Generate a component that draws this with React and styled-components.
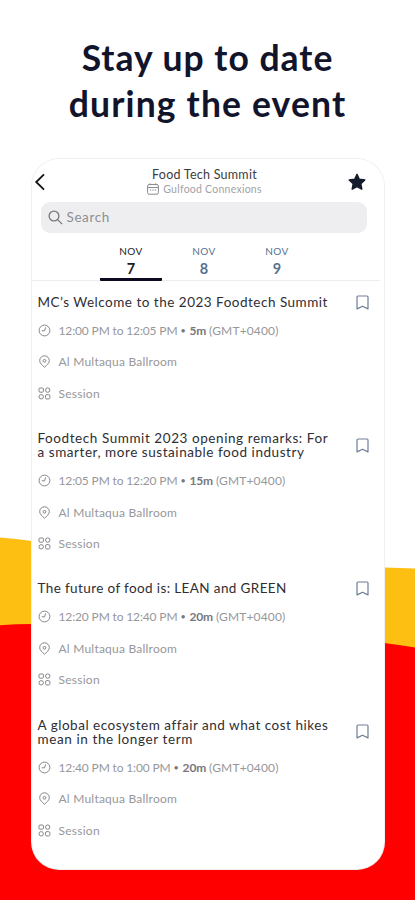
import styled, { createGlobalStyle } from "styled-components";

const sessions = [
  {
    title: [{ text: "MC’s Welcome to the 2023 Foodtech Summit", spacing: 0.5 }],
    time: "12:00 PM to 12:05 PM",
    length: "5m",
  },
  {
    title: [
      { text: "Foodtech Summit 2023 opening remarks: For", spacing: 0.57 },
      { text: "a smarter, more sustainable food industry", spacing: 0.55 },
    ],
    time: "12:05 PM to 12:20 PM",
    length: "15m",
  },
  {
    title: [{ text: "The future of food is: LEAN and GREEN", spacing: 0.38 }],
    time: "12:20 PM to 12:40 PM",
    length: "20m",
  },
  {
    title: [
      { text: "A global ecosystem affair and what cost hikes", spacing: 0.52 },
      { text: "mean in the longer term", spacing: 0.6 },
    ],
    time: "12:40 PM to 1:00 PM",
    length: "20m",
  },
];

const days = ["7", "8", "9"];

const ClockIcon = () => (
  <svg width="13" height="13" viewBox="0 0 13 13" fill="none" stroke="#85858b">
    <circle cx="6.5" cy="6.5" r="5.4" />
    <path d="M7.6 3.4 6.6 6.8H3.8" />
  </svg>
);

const PinIcon = () => (
  <svg width="13" height="13" viewBox="0 0 13 13" fill="none" stroke="#85858b">
    <path d="M6.5 12.2C4.2 10.1 1.7 8.4 1.7 5.6a4.8 4.8 0 0 1 9.6 0c0 2.8-2.5 4.5-4.8 6.6Z" />
    <circle cx="6.5" cy="5.8" r="1.4" />
  </svg>
);

const GridIcon = () => (
  <svg width="13" height="13" viewBox="0 0 13 13" fill="none" stroke="#85858b">
    <rect x="1" y="1" width="4.4" height="4.2" rx="1" />
    <circle cx="9.7" cy="3.1" r="2.2" />
    <circle cx="3.2" cy="9.8" r="2.2" />
    <rect x="7.5" y="7.6" width="4.4" height="4.4" rx="1.4" />
  </svg>
);

const BookmarkIcon = () => (
  <svg width="13" height="15" viewBox="0 0 13 15" fill="none" stroke="#6d7f96" strokeWidth="1.2">
    <path d="M1 13.9V2.1C1 1.4 1.4 1 2.1 1h8.8c.7 0 1.1.4 1.1 1.1v11.8l-5.5-2.7Z" strokeLinejoin="round" />
  </svg>
);

const CalendarIcon = () => (
  <svg width="12" height="12" viewBox="0 0 12 12" fill="none" stroke="#8b8b90">
    <rect x=".6" y="1.5" width="10.8" height="9.7" rx="1.5" />
    <path d="M.6 4.5h10.8M3.2.3v2M8.8.3v2" />
    <path d="M2.8 7h1.4M5.3 7h1.4M7.8 7h1.4" />
  </svg>
);

const App = () => {
  return (
    <>
      <Global />
      <Page>
        <Backdrop viewBox="0 0 415 900">
          <path d="M0 537.5Q16 538.5 32 541L384 567.5Q400 568 415 568.5V900H0Z" fill="#fcbf12" />
          <path d="M0 625.3Q16 624 32 624L384 643Q400 645 415 647.5V900H0Z" fill="#ff0000" />
        </Backdrop>
        <Heading>
          <Line spacing={1}>Stay up to date</Line>
          <Line spacing={1.15}>during the event</Line>
        </Heading>
        <Phone>
          <TopBar>
            <svg width="12" height="18" viewBox="0 0 12 18" fill="none" stroke="#111" strokeWidth="1.8">
              <path d="M10 1.3 2.2 9l7.8 7.6" />
            </svg>
            <Names>
              <EventName>Food Tech Summit</EventName>
              <Parent>
                <CalendarIcon />
                Gulfood Connexions
              </Parent>
            </Names>
            <svg width="18" height="18" viewBox="0 0 18 18" fill="#141c2c" stroke="#141c2c" strokeWidth="1.4" strokeLinejoin="round">
              <path d="m9 1.3 2.3 4.9 5.5.7-4 3.8 1 5.5L9 13.6l-4.8 2.6 1-5.5-4-3.8 5.5-.7Z" />
            </svg>
          </TopBar>
          <Search>
            <svg width="15" height="15" viewBox="0 0 15 15" fill="none" stroke="#77777c" strokeWidth="1.3">
              <circle cx="6" cy="6" r="4.9" />
              <path d="m9.6 9.6 4.5 4.5" />
            </svg>
            Search
          </Search>
          <Tabs>
            {days.map((day) => (
              <Tab key={day} active={day === "7"}>
                <Month>NOV</Month>
                <Day>{day}</Day>
              </Tab>
            ))}
          </Tabs>
          <List>
            {sessions.map((session) => (
              <Session key={session.time}>
                <Top>
                  <Title>
                    {session.title.map((line) => (
                      <Line key={line.text} spacing={line.spacing}>
                        {line.text}
                      </Line>
                    ))}
                  </Title>
                  <BookmarkIcon />
                </Top>
                <Row spacing={-0.14}>
                  <ClockIcon />
                  <span>
                    {session.time} <Dot>•</Dot> <Length>{session.length}</Length> <Zone>(GMT+0400)</Zone>
                  </span>
                </Row>
                <Row spacing={0.22}>
                  <PinIcon />
                  Al Multaqua Ballroom
                </Row>
                <Row spacing={0.25}>
                  <GridIcon />
                  Session
                </Row>
              </Session>
            ))}
          </List>
        </Phone>
      </Page>
    </>
  );
};

const Global = createGlobalStyle`
  body {
    margin: 0;
    background: #fff;
    font-family: Lato, "Open Sans", sans-serif;
  }
  svg {
    display: block;
    flex-shrink: 0;
  }
`;

const Page = styled.div`
  position: relative;
  width: 415px;
  height: 900px;
  overflow: hidden;
  display: flex;
  flex-direction: column;
  align-items: center;
`;

const Backdrop = styled.svg`
  position: absolute;
  top: 0;
  left: 0;
  width: 415px;
  height: 900px;
  z-index: -1;
`;

const Heading = styled.h1`
  margin: 35px 0 0;
  height: 124px;
  box-sizing: border-box;
  font-size: 35.5px;
  line-height: 46px;
  font-weight: 700;
  color: #11142a;
  text-align: center;
`;

const Line = styled.span.withConfig({ shouldForwardProp: (p) => p !== "spacing" })`
  display: block;
  white-space: nowrap;
  letter-spacing: ${({ spacing }) => spacing}px;
`;

const Phone = styled.main`
  width: 352px;
  height: 710px;
  border-radius: 27px;
  background: #fff;
  box-shadow: 0 0 0 1px #f0f0f1;
  overflow: hidden;
`;

const TopBar = styled.header`
  height: 43px;
  padding: 2px 18px 0 2px;
  box-sizing: border-box;
  display: flex;
  align-items: center;
  justify-content: space-between;
`;

const Names = styled.div`
  display: flex;
  flex-direction: column;
  align-items: center;
  padding-left: 16px;
`;

const EventName = styled.div`
  font-size: 12.5px;
  line-height: 15px;
  letter-spacing: 0.25px;
  color: #3c3c40;
`;

const Parent = styled.div`
  display: flex;
  align-items: center;
  gap: 4px;
  font-size: 10.5px;
  line-height: 15px;
  letter-spacing: 0.25px;
  color: #a2a2a6;
`;

const Search = styled.div`
  margin: 0 17px 0 9px;
  height: 31px;
  border-radius: 9px;
  background: #eeeef0;
  display: flex;
  align-items: center;
  gap: 4px;
  padding: 0 7px 1px;
  box-sizing: border-box;
  font-size: 13.5px;
  letter-spacing: 0.6px;
  color: #8e8e93;
`;

const Tabs = styled.nav`
  display: flex;
  justify-content: center;
  gap: 11px;
  height: 47px;
  margin-right: 4px;
  padding-right: 3px;
  border-bottom: 1px solid #ececee;
`;

const Tab = styled.div.withConfig({ shouldForwardProp: (p) => p !== "active" })`
  width: 62px;
  height: 48px;
  box-sizing: border-box;
  padding-top: 12px;
  display: flex;
  flex-direction: column;
  align-items: center;
  color: ${({ active }) => (active ? "#1b1b24" : "#567290")};
  border-bottom: 3px solid ${({ active }) => (active ? "#0b0a20" : "transparent")};
  border-radius: 1px;
`;

const Month = styled.div`
  font-size: 10px;
  line-height: 13px;
  letter-spacing: 0.5px;
`;

const Day = styled.div`
  font-size: 14.5px;
  line-height: 22px;
  font-weight: 700;
`;

const List = styled.section`
  padding: 14px 15px 0 6px;
`;

const Session = styled.article`
  margin-bottom: 22.1px;
`;

const Top = styled.div`
  display: flex;
  align-items: center;
  justify-content: space-between;
  margin-bottom: 5.2px;

  svg {
    margin: -1px 0;
  }
`;

const Title = styled.h2`
  margin: 0;
  font-size: 13.5px;
  line-height: 14.3px;
  font-weight: 400;
  color: #2e2e33;
`;

const Row = styled.div.withConfig({ shouldForwardProp: (p) => p !== "spacing" })`
  height: 31.5px;
  display: flex;
  align-items: center;
  gap: 8px;
  font-size: 12px;
  letter-spacing: ${({ spacing }) => spacing}px;
  color: #97979b;
  white-space: nowrap;
`;

const Dot = styled.span`
  font-size: 9px;
  vertical-align: 1px;
  margin: 0 1px 0 0;
  color: #77777d;
`;

const Length = styled.b`
  font-weight: 700;
  color: #77777d;
`;

const Zone = styled.span`
  letter-spacing: 0.15px;
`;

export default App;
